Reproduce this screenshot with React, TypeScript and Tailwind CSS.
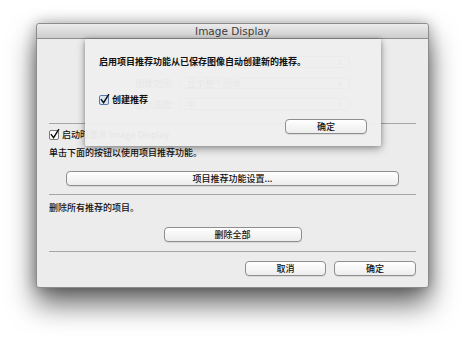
import React from "react";

const font = { fontFamily: '"Noto Sans CJK SC", "Liberation Sans", sans-serif' };

function MacButton({ label, className = "" }: { label: string; className?: string }) {
  return (
    <div
      className={`h-[15px] flex items-center justify-center rounded-[4px] border border-[#8e8e8e] bg-gradient-to-b from-[#ffffff] to-[#ededed] shadow-[0_1px_0_rgba(0,0,0,0.08)] text-[9px] leading-none font-medium text-[#111] ${className}`}
    >
      {label}
    </div>
  );
}

function CheckBox({ blue = false }: { blue?: boolean }) {
  return (
    <svg width="11" height="11" viewBox="0 0 11 11" className="shrink-0">
      <rect
        x="0.5"
        y="1.5"
        width="9"
        height="9"
        rx="1.5"
        fill={blue ? "#dbe6f5" : "#ffffff"}
        stroke={blue ? "#5b7aa8" : "#7b7b7b"}
      />
      <path d="M2.3 5.6 L4.6 8.6 L9.6 0.6" fill="none" stroke="#111" strokeWidth="1.5" strokeLinecap="round" />
    </svg>
  );
}

function GhostSelect({ label, value }: { label: string; value: string }) {
  return (
    <div className="flex items-center h-[12px]">
      <span className="w-[131px] pr-[6px] text-right text-[9px] leading-none text-[#222]">{label}</span>
      <div className="w-[170px] h-[12px] rounded-[3px] border border-[#999] bg-white flex items-center justify-between px-[6px] text-[9px] leading-none text-[#222]">
        <span>{value}</span>
        <span className="text-[7px]">⇕</span>
      </div>
    </div>
  );
}

export default function App() {
  return (
    <div className="w-[468px] h-[338px] bg-white pt-[23px] pl-[36px] overflow-hidden" style={font}>
      <div className="relative w-[393px] h-[265px] bg-[#ececec] rounded-[3px] border border-[#8c8c8c] shadow-[0_16px_28px_rgba(0,0,0,0.6),0_0_14px_rgba(0,0,0,0.3)] flex flex-col">
        {/* Title bar */}
        <div className="h-[15px] shrink-0 rounded-t-[3px] bg-gradient-to-b from-[#ececec] to-[#cdcdcd] border-b border-[#8f8f8f] flex items-center justify-center">
          <span className="text-[10.5px] leading-none text-[#3c3c3c]" style={{ fontFamily: '"DejaVu Sans", sans-serif' }}>
            Image Display
          </span>
        </div>

        {/* Main content */}
        <div className="flex-1 flex flex-col px-[12px]">
          <div className="flex flex-col gap-[9px] pt-[17px]">
            <GhostSelect label="" value="" />
            <GhostSelect label="图像范围:" value="显示整个图像" />
            <GhostSelect label="显示速度:" value="中" />
          </div>

          <div className="mt-[13px] h-px bg-[#a6a6a6]" />

          <div className="mt-[5px] flex items-center gap-[2px] h-[11px]">
            <CheckBox />
            <span className="text-[9px] leading-none font-medium text-[#111]">启动时显示 Image Display</span>
          </div>

          <div className="mt-[8px] text-[9px] leading-none font-medium text-[#111]">单击下面的按钮以使用项目推荐功能。</div>

          <div className="mt-[14px] px-[17px]">
            <MacButton label="项目推荐功能设置..." />
          </div>

          <div className="mt-[8px] h-px bg-[#a6a6a6]" />

          <div className="mt-[8px] text-[9px] leading-none font-medium text-[#111]">删除所有推荐的项目。</div>

          <div className="mt-[15px] flex justify-center">
            <MacButton label="删除全部" className="w-[138px]" />
          </div>

          <div className="mt-[9px] h-px bg-[#a6a6a6]" />

          <div className="mt-[9px] flex justify-end gap-[8px]">
            <MacButton label="取消" className="w-[81px]" />
            <MacButton label="确定" className="w-[82px]" />
          </div>
        </div>

        {/* Sheet */}
        <div className="absolute left-[48px] top-[15px] w-[296px] h-[107px] bg-[#eeeeee]/[0.96] rounded-b-[2px] shadow-[0_3px_8px_rgba(0,0,0,0.35),0_0_4px_rgba(0,0,0,0.2)] flex flex-col px-[14px]">
          <div className="mt-[18px] text-[9px] leading-none text-[#111] font-bold">
            启用项目推荐功能从已保存图像自动创建新的推荐。
          </div>
          <div className="mt-[28px] flex items-center gap-[2px] h-[11px]">
            <CheckBox blue />
            <span className="text-[9px] leading-none text-[#111] font-bold">创建推荐</span>
          </div>
          <div className="mt-[14px] flex justify-end">
            <MacButton label="确定" className="w-[82px]" />
          </div>
        </div>
      </div>
    </div>
  );
}
